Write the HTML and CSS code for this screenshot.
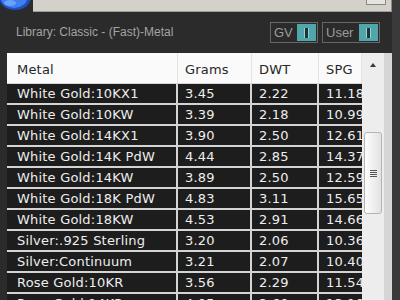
FILE: index.html
```html
<!DOCTYPE html>
<html lang="en">
<head>
    <meta charset="UTF-8">
    <title>Metal Library</title>
    <link rel="stylesheet" href="styles.css">
</head>
<body>
    <div class="window">
        <div class="topbar">
            <div class="logo">
                <svg width="32" height="12" viewBox="0 0 32 12">
                    <ellipse cx="15" cy="-3" rx="16" ry="13" fill="#1d4fc0"/>
                    <ellipse cx="14" cy="-2" rx="13" ry="10" fill="#3f7ff0"/>
                    <ellipse cx="10" cy="3" rx="6" ry="3" fill="#7fb0ff" opacity="0.7"/>
                </svg>
            </div>
            <div class="tabs">
                <div class="tab-btn"></div>
            </div>
        </div>
        <div class="toolbar">
            <span class="lib-label">Library: Classic - (Fast)-Metal</span>
            <div class="toggles">
                <div class="toggle gv"><span>GV</span><div class="knob"><i></i></div></div>
                <div class="toggle user"><span>User</span><div class="knob"><i></i></div></div>
            </div>
        </div>
        <div class="grid">
            <div class="table">
                <div class="row head">
                    <div class="cell">Metal</div>
                    <div class="cell">Grams</div>
                    <div class="cell">DWT</div>
                    <div class="cell">SPG</div>
                </div>
                <div class="row"><div class="cell">White Gold:10KX1</div><div class="cell">3.45</div><div class="cell">2.22</div><div class="cell">11.18</div></div>
                <div class="row"><div class="cell">White Gold:10KW</div><div class="cell">3.39</div><div class="cell">2.18</div><div class="cell">10.99</div></div>
                <div class="row"><div class="cell">White Gold:14KX1</div><div class="cell">3.90</div><div class="cell">2.50</div><div class="cell">12.61</div></div>
                <div class="row"><div class="cell">White Gold:14K PdW</div><div class="cell">4.44</div><div class="cell">2.85</div><div class="cell">14.37</div></div>
                <div class="row"><div class="cell">White Gold:14KW</div><div class="cell">3.89</div><div class="cell">2.50</div><div class="cell">12.59</div></div>
                <div class="row"><div class="cell">White Gold:18K PdW</div><div class="cell">4.83</div><div class="cell">3.11</div><div class="cell">15.65</div></div>
                <div class="row"><div class="cell">White Gold:18KW</div><div class="cell">4.53</div><div class="cell">2.91</div><div class="cell">14.66</div></div>
                <div class="row"><div class="cell">Silver:.925 Sterling</div><div class="cell">3.20</div><div class="cell">2.06</div><div class="cell">10.36</div></div>
                <div class="row"><div class="cell">Silver:Continuum</div><div class="cell">3.21</div><div class="cell">2.07</div><div class="cell">10.40</div></div>
                <div class="row"><div class="cell">Rose Gold:10KR</div><div class="cell">3.56</div><div class="cell">2.29</div><div class="cell">11.54</div></div>
                <div class="row"><div class="cell">Rose Gold:14KR</div><div class="cell">4.05</div><div class="cell">2.60</div><div class="cell">13.10</div></div>
            </div>
            <div class="scroll">
                <div class="arrow"></div>
                <div class="thumb"><i></i><i></i><i></i><i></i></div>
            </div>
        </div>
    </div>
</body>
</html>
```

FILE: styles.css
```css
body {
    margin: 0;
    background: #3a3a3a;
    font-family: "DejaVu Sans", Verdana, sans-serif;
}
.window {
    width: 392px;
    height: 300px;
    display: flex;
    flex-direction: column;
    background: #2b2b2b;
    overflow: hidden;
}
.topbar {
    display: flex;
    height: 12px;
    flex: none;
}
.logo {
    width: 33px;
    height: 12px;
}
.logo svg {
    display: block;
}
.tabs {
    flex: 1;
    background: #d4d1cb;
    border-bottom: 1px solid #a09d98;
    border-right: 1px solid #8d8b87;
    display: flex;
    justify-content: flex-end;
    padding-right: 5px;
}
.tab-btn {
    width: 18px;
    height: 4px;
    border: 1px solid #8a8884;
    border-top: none;
    background: #e6e4df;
}
.toolbar {
    height: 41px;
    flex: none;
    display: flex;
    align-items: center;
    justify-content: space-between;
    padding: 0 12px 0 16px;
}
.lib-label {
    font-family: "Liberation Sans", Arial, sans-serif;
    font-size: 12px;
    color: #a3a3a3;
    margin-top: -1px;
}
.toggles {
    display: flex;
    gap: 4px;
}
.toggle {
    height: 21px;
    box-sizing: border-box;
    border: 1px solid #666;
    display: flex;
    align-items: center;
    justify-content: space-between;
    padding: 0 1px 0 3px;
    font-family: "Liberation Sans", Arial, sans-serif;
    font-size: 13px;
    color: #9c9c9c;
}
.toggle.gv {
    width: 48px;
}
.toggle.user {
    width: 58px;
}
.knob {
    width: 19px;
    height: 17px;
    background: #4fa6ab;
    display: flex;
    align-items: center;
    justify-content: center;
}
.knob i {
    width: 3px;
    height: 10px;
    background: #1d3435;
    border: 1px solid #9ad0d3;
    border-top: none;
    border-bottom: none;
}
.grid {
    flex: 1;
    min-height: 0;
    display: flex;
    margin-left: 7px;
    background: #d9d9d9;
}
.table {
    width: 355px;
    overflow: hidden;
    background: #d4d4d4;
}
.row {
    display: grid;
    grid-template-columns: 171px 74px 67px 43px;
    height: 21px;
    box-sizing: border-box;
    border-bottom: 2px solid #d4d4d4;
    background: #1d1d1d;
    color: #eeeeee;
    font-size: 13px;
    letter-spacing: 0.2px;
}
.row.head {
    height: 31px;
    background: #fafafa;
    color: #262626;
    border-bottom: 1px solid #d6d6d6;
}
.cell {
    box-sizing: border-box;
    border-right: 2px solid #d4d4d4;
    padding-left: 7px;
    white-space: nowrap;
    overflow: hidden;
    display: flex;
    align-items: center;
}
.cell:first-child {
    padding-left: 10px;
}
.cell:last-child {
    border-right: none;
}
.head .cell {
    border-right: 1px solid #e4e4e4;
    padding-top: 2px;
}
.scroll {
    width: 22px;
    background: #ededed;
    border-right: 7px solid #d5d5d5;
    box-sizing: content-box;
    display: flex;
    flex-direction: column;
    align-items: center;
}
.arrow {
    margin-top: 10px;
    width: 0;
    height: 0;
    border-left: 3px solid transparent;
    border-right: 3px solid transparent;
    border-bottom: 4px solid #3a3a3a;
}
.thumb {
    margin-top: 65px;
    width: 18px;
    height: 82px;
    box-sizing: border-box;
    border: 1px solid #b4b4b4;
    border-radius: 3px;
    background: linear-gradient(to right, #fdfdfd, #e2e2e2);
    display: flex;
    flex-direction: column;
    align-items: center;
    justify-content: center;
    gap: 1px;
}
.thumb i {
    width: 7px;
    height: 1px;
    background: #555;
}
```
